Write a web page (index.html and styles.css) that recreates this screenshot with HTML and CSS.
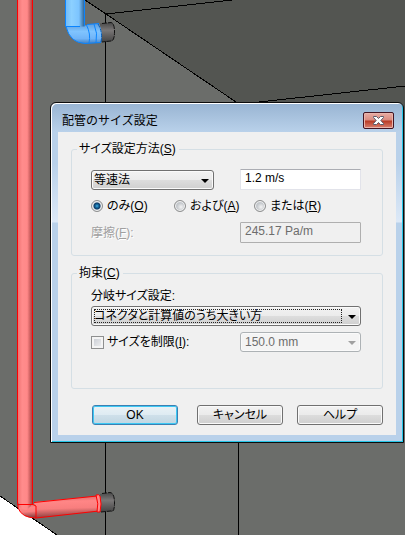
FILE: index.html
```html
<!DOCTYPE html>
<html lang="ja">
<head>
    <meta charset="UTF-8">
    <meta name="viewport" content="width=device-width, initial-scale=1.0">
    <title>配管のサイズ設定</title>
    <link rel="stylesheet" href="styles.css">
</head>
<body>
    <svg class="scene" viewBox="0 0 405 535" preserveAspectRatio="xMinYMin slice" aria-hidden="true">
        <defs>
            <linearGradient id="redV">
                <stop offset="0" stop-color="#f07474"/>
                <stop offset="0.3" stop-color="#ff8c8c"/>
                <stop offset="0.65" stop-color="#ff8888"/>
                <stop offset="1" stop-color="#a84444"/>
            </linearGradient>
            <linearGradient id="redH" x1="0" y1="0" x2="0.1" y2="1">
                <stop offset="0" stop-color="#d06060"/>
                <stop offset="0.3" stop-color="#ff8686"/>
                <stop offset="0.6" stop-color="#f87e7e"/>
                <stop offset="1" stop-color="#8c4040"/>
            </linearGradient>
            <linearGradient id="blueV">
                <stop offset="0" stop-color="#74bcf8"/>
                <stop offset="0.3" stop-color="#8cd0ff"/>
                <stop offset="0.7" stop-color="#7cc4ff"/>
                <stop offset="1" stop-color="#2c6090"/>
            </linearGradient>
            <linearGradient id="blueH" x1="0" y1="0" x2="0" y2="1">
                <stop offset="0" stop-color="#5c9cdc"/>
                <stop offset="0.4" stop-color="#80c4ff"/>
                <stop offset="0.75" stop-color="#70b4f8"/>
                <stop offset="1" stop-color="#4480c0"/>
            </linearGradient>
            <linearGradient id="cap" x1="0" y1="0" x2="0" y2="1">
                <stop offset="0" stop-color="#484848"/>
                <stop offset="0.4" stop-color="#7a7777"/>
                <stop offset="1" stop-color="#444"/>
            </linearGradient>
        </defs>
        <rect width="405" height="535" fill="#6b6d6a"/>
        <path d="M85 0L106 14L236 102V120H405V0Z" fill="#535551"/>
        <path d="M0 496L57 535H0Z" fill="#fff"/>
        <g fill="none" stroke="#000" shape-rendering="crispEdges">
            <path d="M85 0L106 14L236 102M106 14L232 0M259 102L405 86M0 496L57 535"/>
            <path d="M105.500 14V535M238.500 440V535"/>
        </g>

        <!-- blue pipe -->
        <path d="M100 23.500L111 22.500Q114.500 23 114.500 32T111 41L100 42Z" fill="url(#cap)"/>
        <path d="M102 23.500L111 22.500Q114.500 23 114.500 32T111 41L102 42" fill="none" stroke="#111" stroke-dasharray="5 1"/>
        <path d="M66 26.500L84 26L88 24.500L99 23.500Q103 32 101 42.500L85 43.500Q70 43 66 26.500Z" fill="url(#blueH)"/>
        <path d="M66 -1H84.500V26.500H66Z" fill="url(#blueV)"/>
        <path d="M65.500 -1V26.500H80M84.500 -1V26M66 26.500Q70 43 85 43.500L101 42.500M87 24.500L99 23.500M86.500 25Q91 34 89 43M94 24Q98 33 96 43" fill="none" stroke="#0a84ff"/>
        <path d="M98 24Q103 32 101 42" fill="none" stroke="#0a5cb4" stroke-dasharray="4 1"/>

        <!-- red pipe -->
        <path d="M100 494L110 492.500Q114.500 493 114.500 503T111 511L100 512Z" fill="url(#cap)"/>
        <path d="M102 493.500L110 492.500Q114.500 493 114.500 503T111 511L101 512" fill="none" stroke="#111" stroke-dasharray="5 1"/>
        <path d="M34 502L97 496L99 511L36 518Z" fill="url(#redH)"/>
        <path d="M34 502.500L97 496M36 518L99 511" fill="none" stroke="#f00"/>
        <path d="M96 495Q99 494 100 496Q102 504 100 512H97Q99 504 96 495Z" fill="#ff8888" stroke="#f00"/>
        <path d="M18 504H33L36 505V518Q22 518 18 508Z" fill="url(#redH)"/>
        <path d="M18 -1H32V501Q33 506 26 510Q20 509 18 502Z" fill="url(#redV)"/>
        <path d="M17.500 -1V504.500H33L36 506V518Q22 518 18 508V504" fill="none" stroke="#f00"/>
        <path d="M32.500 -1V504" fill="none" stroke="#f00"/>
    </svg>

    <main class="desktop">
        <form class="dialog">
            <header class="titlebar">
                <h1>配管のサイズ設定</h1>
                <button type="button" class="close" aria-label="閉じる">
                    <svg viewBox="0 0 13 11" width="13" height="11">
                        <path d="M1.500 1.500H4.500L6.500 3.500L8.500 1.500H11.500V2.500L8.800 5.500L11.500 8.500V9.500H8.500L6.500 7.500L4.500 9.500H1.500V8.500L4.200 5.500L1.500 2.500Z" fill="#fff" stroke="#5a5c6c"/>
                    </svg>
                </button>
            </header>
            <div class="content">
                <fieldset class="method">
                    <legend>サイズ設定方法(<u>S</u>)</legend>
                    <div class="row">
                        <span class="combo combo-short">
                            <select aria-label="サイズ設定方法"><option>等速法</option></select>
                        </span>
                        <input class="text" type="text" value="1.2 m/s" aria-label="速度">
                    </div>
                    <div class="radios">
                        <label><input type="radio" name="op" checked>のみ(<u>O</u>)</label>
                        <label><input type="radio" name="op">および(<u>A</u>)</label>
                        <label><input type="radio" name="op">または(<u>R</u>)</label>
                    </div>
                    <div class="row">
                        <label class="disabled" for="friction">摩擦(<u>F</u>):</label>
                        <input class="text" id="friction" type="text" value="245.17 Pa/m" disabled>
                    </div>
                </fieldset>
                <fieldset class="limits">
                    <legend>拘束(<u>C</u>)</legend>
                    <label class="branch" for="branch">分岐サイズ設定:</label>
                    <span class="combo focused">
                        <select id="branch"><option>コネクタと計算値のうち大きい方</option></select>
                    </span>
                    <div class="row">
                        <label class="check"><input type="checkbox">サイズを制限(<u>I</u>):</label>
                        <span class="combo off">
                            <select aria-label="サイズを制限" disabled><option>150.0 mm</option></select>
                        </span>
                    </div>
                </fieldset>
                <div class="buttons">
                    <button type="button" class="btn btn-default">OK</button>
                    <button type="button" class="btn">キャンセル</button>
                    <button type="button" class="btn">ヘルプ</button>
                </div>
            </div>
        </form>
    </main>
</body>
</html>
```

FILE: styles.css
```css
* {
    box-sizing: border-box;
}
body {
    margin: 0;
    min-height: 100vh;
    background-color: #6b6d6a;
    color: #000;
}
body, input, select, button {
    font-family: "Liberation Sans", "Noto Sans CJK JP", sans-serif;
    font-size: 12px;
    line-height: 16px;
    font-feature-settings: "palt";
}
.scene {
    position: absolute;
    left: 0;
    top: 0;
    width: 100%;
    height: 100vh;
}
.desktop {
    position: relative;
    padding: 102px 1px 0 50px;
}
.dialog {
    border: 1px solid #0c0c0c;
    border-radius: 6px 6px 0 0;
    padding: 1px 7px 7px;
    background: linear-gradient(#98b4d2 0, #b9d1ea 29px, #b9d1ea 60px, #dde9f7 119px, #b9d1ea 120px);
    box-shadow: inset 1px 1px #fff, inset -1px -1px #25c6e8;
}
.titlebar {
    display: flex;
    align-items: center;
    justify-content: space-between;
    height: 28px;
    padding: 5px 2px 0 4px;
}
.titlebar h1 {
    margin: 0;
    font-size: 12px;
    font-weight: normal;
    font-feature-settings: normal;
}
.close {
    display: flex;
    align-items: center;
    justify-content: center;
    width: 31px;
    height: 17px;
    padding: 0;
    border: 1px solid #431422;
    border-radius: 2px;
    background: linear-gradient(#e8aca4 0, #d98b80 7px, #b93b26 8px, #d88070);
    box-shadow: inset 0 0 0 1px #e9b4ac;
}
.content {
    padding: 9px 13px 10px;
    background-color: #f0f0f0;
}
fieldset {
    min-width: 0;
    margin: 0;
    border: 1px solid #d5dfe5;
    border-radius: 3px;
}
legend {
    margin-left: -14px;
    padding: 0 3px 0 2px;
}
.method {
    padding: 12px 21px 12px 19px;
}
.limits {
    margin-top: 9px;
    padding: 7px 21px 36px 19px;
}
.row {
    display: grid;
    grid-template-columns: 1fr 121px;
    align-items: end;
}
.text {
    width: 100%;
    height: 21px;
    padding: 0 4px 3px;
    border: 1px solid #e2e3ea;
    border-top-color: #abadb3;
    border-radius: 1px;
    background-color: #fff;
}
.text:disabled {
    border: 1px solid #afafaf;
    background-color: #f0f0f0;
    color: #6d6d6d;
}
.combo {
    display: block;
    position: relative;
}
.combo-short {
    margin-right: 26px;
}
.combo select {
    display: block;
    appearance: none;
    width: 100%;
    height: 20px;
    margin: 0;
    padding: 0 20px 0 2px;
    border: 1px solid #707070;
    border-radius: 3px;
    background: linear-gradient(#f2f2f2, #ebebeb 50%, #dddddd 50%, #cfcfcf);
    box-shadow: inset 0 0 0 1px #fafafa;
    color: #000;
}
.combo::after {
    content: "";
    position: absolute;
    right: 5px;
    top: 9px;
    border: 4px solid transparent;
    border-top-color: #000;
    border-bottom: 0;
}
/* dotted focus box stops short of the arrow */
.focused::before {
    content: "";
    position: absolute;
    left: 3px;
    right: 19px;
    top: 3px;
    bottom: 3px;
    border: 1px dotted #222;
    pointer-events: none;
}
.combo.off select {
    padding-left: 4px;
    border-color: #adb2b5;
    background: #f4f4f4;
    color: #6d6d6d;
    opacity: 1;
}
.off::after {
    border-top-color: #a0a0a0;
}
.radios {
    display: grid;
    grid-template-columns: 83px 80px auto;
    margin: 8px 0;
}
.radios label, .check {
    display: flex;
    align-items: center;
    white-space: nowrap;
}
input[type="radio"], input[type="checkbox"] {
    appearance: none;
    flex: none;
    margin: 0 3px 0 0;
    border: 1px solid #8e8f8f;
}
input[type="radio"] {
    width: 12px;
    height: 12px;
    margin-right: 4px;
    border-radius: 50%;
    background: radial-gradient(circle at 60% 60%, #f4f4f4, #c4c8cc 4px);
    box-shadow: inset 0 0 0 1px #f4f4f4;
}
input[type="radio"]:checked {
    background: radial-gradient(circle, #5cc4f0 0, #1c7cb4 1px, #0c3c68 3px, #c4ccd4 4px);
}
input[type="checkbox"] {
    width: 13px;
    height: 13px;
    background: linear-gradient(135deg, #c4c8d0, #f4f4f4);
    box-shadow: inset 0 0 0 2px #f4f4f4;
}
.disabled {
    align-self: center;
    color: #a0a0a0;
    text-shadow: 1px 1px #fff;
}
.branch {
    display: block;
    margin-bottom: 2px;
}
.limits .row {
    margin-top: 6px;
    align-items: center;
}
.buttons {
    display: flex;
    justify-content: flex-end;
    gap: 14px;
    margin-top: 16px;
}
.btn {
    width: 86px;
    height: 20px;
    padding: 0;
    border: 1px solid #707070;
    border-radius: 3px;
    background: linear-gradient(#f2f2f2, #ebebeb 50%, #dddddd 50%, #cfcfcf);
    box-shadow: inset 0 0 0 1px #fafafa;
    line-height: 16px;
}
.btn-default {
    margin-right: 5px;
    border-color: #3c7fb1;
    background: linear-gradient(#eaf2f6, #deebf2 50%, #cfe0ea 50%, #c0d6e2);
    box-shadow: inset 0 0 0 1px #3cc8f4;
}
```
